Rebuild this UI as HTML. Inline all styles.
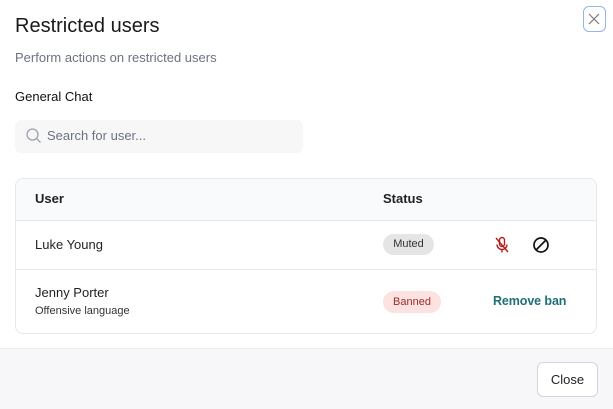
<!DOCTYPE html>
<html><head><style>
body{margin:0;width:613px;height:408px;background:#fff;font-family:"Liberation Sans",sans-serif;position:relative;overflow:hidden;color:#111}
.a{position:absolute}
</style></head><body>
<div class="a" style="left:15px;top:15px;font-size:20px;color:#1a1a1a">Restricted users</div>
<div class="a" style="left:15px;top:50px;font-size:13px;color:#6b7280">Perform actions on restricted users</div>
<div class="a" style="left:15px;top:89px;font-size:13px;color:#111">General Chat</div>
<div class="a" style="left:583px;top:6px;width:23px;height:26px;border:1.5px solid #93b4f5;border-radius:6px;box-sizing:border-box;"><svg width="20" height="23" viewBox="0 0 20 23"><path d="M5 7l10 10M15 7l-10 10" stroke="#777" stroke-width="1.2"/></svg></div>
<div class="a" style="left:15px;top:120px;width:288px;height:33px;background:#f7f7f8;border-radius:6px"></div>
<svg class="a" style="left:25px;top:127px" width="18" height="18" viewBox="0 0 18 18"><circle cx="7.5" cy="7.5" r="5.5" fill="none" stroke="#9ca3af" stroke-width="1.3"/><path d="M11.5 11.5l4 4" stroke="#9ca3af" stroke-width="1.3"/></svg>
<div class="a" style="left:47px;top:128px;font-size:13px;color:#6b7280">Search for user...</div>
<div class="a" style="left:15px;top:178px;width:582px;height:156px;border:1px solid #e6e8ec;border-radius:8px;box-sizing:border-box;overflow:hidden">
<div style="height:42px;background:#f9fafb;border-bottom:1px solid #e6e8ec;box-sizing:border-box"></div>
<div style="height:49px;border-bottom:1px solid #e6e8ec;box-sizing:border-box"></div>
</div>
<div class="a" style="left:35px;top:191px;font-size:13px;font-weight:bold;color:#222">User</div>
<div class="a" style="left:383px;top:191px;font-size:13px;font-weight:bold;color:#222">Status</div>
<div class="a" style="left:35px;top:237px;font-size:13px;color:#222">Luke Young</div>
<div class="a" style="left:383px;top:234px;width:51px;height:21px;background:#e5e5e5;border-radius:11px;font-size:11px;color:#333;text-align:center;line-height:21px">Muted</div>
<svg class="a" style="left:494px;top:236px" width="16" height="18" viewBox="0 0 16 18"><rect x="5.5" y="1.5" width="5" height="9" rx="2.5" fill="none" stroke="#b91c1c" stroke-width="1.4"/><path d="M3 8.5a5 5 0 0 0 10 0M8 13.5v3M2 2l12 14" stroke="#b91c1c" stroke-width="1.4" fill="none"/></svg>
<svg class="a" style="left:532px;top:236px" width="18" height="18" viewBox="0 0 18 18"><circle cx="9" cy="9" r="7" fill="none" stroke="#111" stroke-width="1.7"/><path d="M4 14L14 4" stroke="#111" stroke-width="1.7"/></svg>
<div class="a" style="left:35px;top:285px;font-size:13px;color:#222">Jenny Porter</div>
<div class="a" style="left:35px;top:305px;font-size:11px;color:#333">Offensive language</div>
<div class="a" style="left:383px;top:291px;width:58px;height:22px;background:#fde2e2;border-radius:11px;font-size:11px;color:#9b2c2c;text-align:center;line-height:22px">Banned</div>
<div class="a" style="left:493px;top:294px;font-size:12.5px;font-weight:bold;color:#1f6f78;letter-spacing:-0.1px">Remove ban</div>
<div class="a" style="left:0;top:348px;width:613px;height:60px;background:#f7f7f9;border-top:1px solid #eceef1"></div>
<div class="a" style="left:537px;top:362px;width:61px;height:35px;background:#fff;border:1px solid #d1d5db;border-radius:6px;box-sizing:border-box;font-size:13px;text-align:center;line-height:33px;color:#222">Close</div>
</body></html>
